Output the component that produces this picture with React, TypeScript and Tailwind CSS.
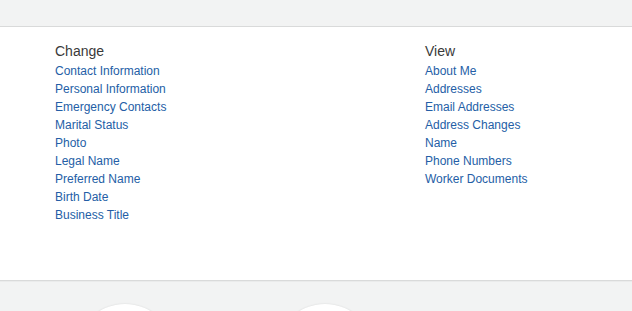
import React from "react";

const change = [
  "Contact Information",
  "Personal Information",
  "Emergency Contacts",
  "Marital Status",
  "Photo",
  "Legal Name",
  "Preferred Name",
  "Birth Date",
  "Business Title",
];
const view = [
  "About Me",
  "Addresses",
  "Email Addresses",
  "Address Changes",
  "Name",
  "Phone Numbers",
  "Worker Documents",
];

function Column({ title, items }: { title: string; items: string[] }) {
  return (
    <div className="w-[370px] shrink-0 flex flex-col">
      <div className="text-[14px] leading-[20px] text-[#3a3a3a]">{title}</div>
      <ul className="flex flex-col mt-[1px]">
        {items.map((t) => (
          <li key={t} className="text-[12px] leading-[18px] text-[#245ea6]">
            <a href="#">{t}</a>
          </li>
        ))}
      </ul>
    </div>
  );
}

export default function App() {
  return (
    <div
      className="w-[632px] h-[311px] overflow-hidden bg-[#f2f3f3] flex flex-col"
      style={{ fontFamily: '"Liberation Sans", Arial, sans-serif' }}
    >
      <div className="h-[27px] shrink-0 border-b border-[#d9dada]" />
      <div className="h-[254px] shrink-0 bg-white border-b border-[#d9dada] flex pl-[55px] pt-[14px]">
        <Column title="Change" items={change} />
        <Column title="View" items={view} />
      </div>
      <div className="flex-1 border-t border-[#eaebeb] flex pl-[75px] gap-[100px] pt-[22px]">
        <div className="w-[100px] h-[100px] shrink-0 rounded-full bg-white shadow-[0_0_2px_rgba(0,0,0,0.12)]" />
        <div className="w-[100px] h-[100px] shrink-0 rounded-full bg-white shadow-[0_0_2px_rgba(0,0,0,0.12)]" />
      </div>
    </div>
  );
}
